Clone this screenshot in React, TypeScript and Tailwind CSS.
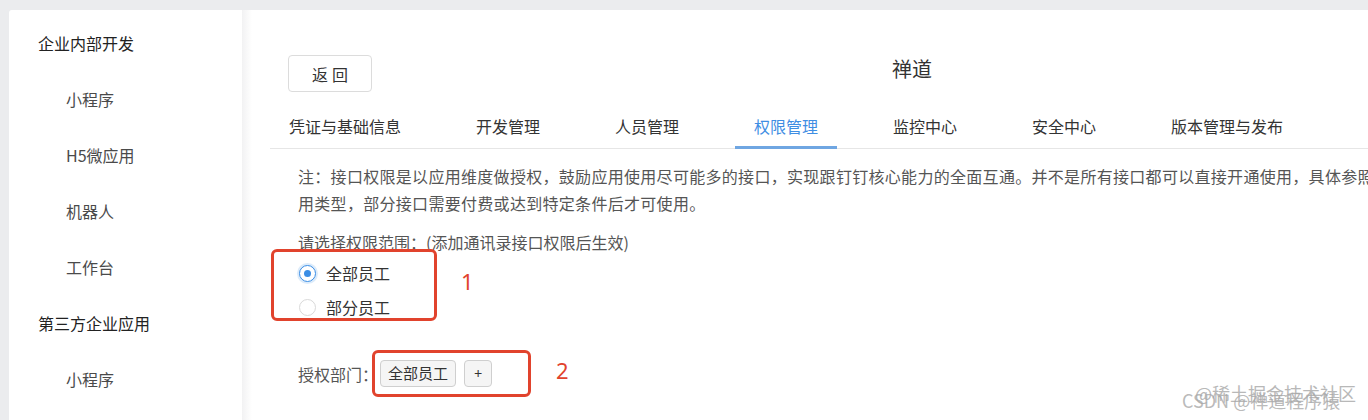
import React from "react";

const sideItems = [
    { label: "企业内部开发", head: true },
    { label: "小程序" },
    { label: "H5微应用" },
    { label: "机器人" },
    { label: "工作台" },
    { label: "第三方企业应用", head: true },
    { label: "小程序" },
];

const tabs = ["凭证与基础信息", "开发管理", "人员管理", "权限管理", "监控中心", "安全中心", "版本管理与发布"];

function Radio({ checked, label }: { checked?: boolean; label: string }) {
    return (
        <label className="flex items-center h-[34px] pl-px gap-[10px] text-[16px] text-[#333]">
            <span
                className={
                    checked
                        ? "w-[17px] h-[17px] rounded-full border border-[#3b8ee5] bg-white flex items-center justify-center shadow-[0_0_0_2px_rgba(59,142,229,0.18)]"
                        : "w-[17px] h-[17px] rounded-full border border-[#d9d9d9] bg-white"
                }
            >
                {checked && <span className="w-[7px] h-[7px] rounded-full bg-[#3b8ee5]" />}
            </span>
            {label}
        </label>
    );
}

export default function App() {
    return (
        <div className="relative w-[1368px] h-[420px] overflow-hidden bg-[#ebecee] pt-[10px] font-['Noto_Sans_CJK_SC','Noto_Sans',sans-serif]">
            <div className="flex h-full">
                {/* sidebar */}
                <aside className="ml-[9px] w-[233px] shrink-0 bg-white rounded-tl-[3px] pt-[5px]">
                    {sideItems.map((it, i) => (
                        <div
                            key={i}
                            className={
                                it.head
                                    ? "h-[56px] flex items-center pl-[29px] text-[16px] text-[#222]"
                                    : "h-[56px] flex items-center pl-[57px] text-[16px] text-[#4a4a4a]"
                            }
                        >
                            {it.label}
                        </div>
                    ))}
                </aside>
                <div className="w-[10px] shrink-0 bg-gradient-to-r from-[#f2f2f3] to-white" />

                {/* main */}
                <main className="relative w-[1320px] shrink-0 bg-white px-[18px] pt-[45px]">
                    <div className="grid grid-cols-[1fr_auto_1fr] items-start">
                        <button className="justify-self-start ml-[18px] w-[84px] h-[37px] rounded-[4px] border border-[#dcdcdc] bg-white text-[16px] text-[#333] tracking-[4px] pl-[4px]">
                            返回
                        </button>
                        <div className="text-[20px] leading-[28px] text-[#333]">禅道</div>
                        <div />
                    </div>

                    <div className="mt-[10px] h-[47px] flex gap-[37px] border-b border-[#e6e6e6]">
                        {tabs.map((t, i) => (
                            <div
                                key={t}
                                className={
                                    i === 3
                                        ? "px-[19px] h-[47px] -mb-px flex items-center text-[16px] text-[#3f8ee3] border-b-[3px] border-[#6fa6e2] pt-[3px]"
                                        : "px-[19px] h-[47px] -mb-px flex items-center text-[16px] text-[#333] border-b-[3px] border-transparent pt-[3px]"
                                }
                            >
                                {t}
                            </div>
                        ))}
                    </div>

                    <div className="pl-[28px]">
                        <p className="mt-[14px] text-[16px] leading-[27px] text-[#555] tracking-[0.3px] whitespace-nowrap">
                            注：接口权限是以应用维度做授权，鼓励应用使用尽可能多的接口，实现跟钉钉核心能力的全面互通。并不是所有接口都可以直接开通使用，具体参照接口文档说明，接口权限根据应
                            <br />
                            用类型，部分接口需要付费或达到特定条件后才可使用。
                        </p>
                        <p className="mt-[12px] text-[16px] leading-[27px] text-[#555]">请选择权限范围：(添加通讯录接口权限后生效)</p>
                        <div className="flex flex-col">
                            <Radio checked label="全部员工" />
                            <Radio label="部分员工" />
                        </div>
                        <div className="mt-[36px] flex items-center h-[27px] text-[16px] text-[#555]">
                            <span>授权部门：</span>
                            <div className="ml-[2px] flex gap-[8px]">
                                <span className="h-[27px] px-[7px] flex items-center rounded-[4px] border border-[#cfcfcf] bg-[#f5f5f5] text-[15px] text-[#333]">
                                    全部员工
                                </span>
                                <span className="h-[27px] w-[28px] flex items-center justify-center rounded-[4px] border border-[#cfcfcf] bg-[#f5f5f5] text-[14px] text-[#333]">
                                    +
                                </span>
                            </div>
                        </div>
                    </div>

                    {/* annotations */}
                    <div className="absolute left-[19px] top-[239px] w-[166px] h-[72px] rounded-[6px] border-[3px] border-[#e1432d]" />
                    <div className="absolute left-[209px] top-[257px] text-[22px] leading-[28px] text-[#e1432d] font-['Noto_Sans',sans-serif]">1</div>
                    <div className="absolute left-[120px] top-[340px] w-[159px] h-[47px] rounded-[6px] border-[3px] border-[#e1432d]" />
                    <div className="absolute left-[304px] top-[346px] text-[22px] leading-[28px] text-[#e1432d] font-['Noto_Sans',sans-serif]">2</div>
                </main>
            </div>

            {/* watermarks */}
            <div className="absolute left-[1195px] top-[381px] text-[18px] leading-[24px] text-[#b8b8b8] whitespace-nowrap">@稀土掘金技术社区</div>
            <div className="absolute left-[1182px] top-[388px] text-[18px] leading-[24px] text-[#a8a8a8]/80 whitespace-nowrap">CSDN @禅道程序猿</div>
        </div>
    );
}
